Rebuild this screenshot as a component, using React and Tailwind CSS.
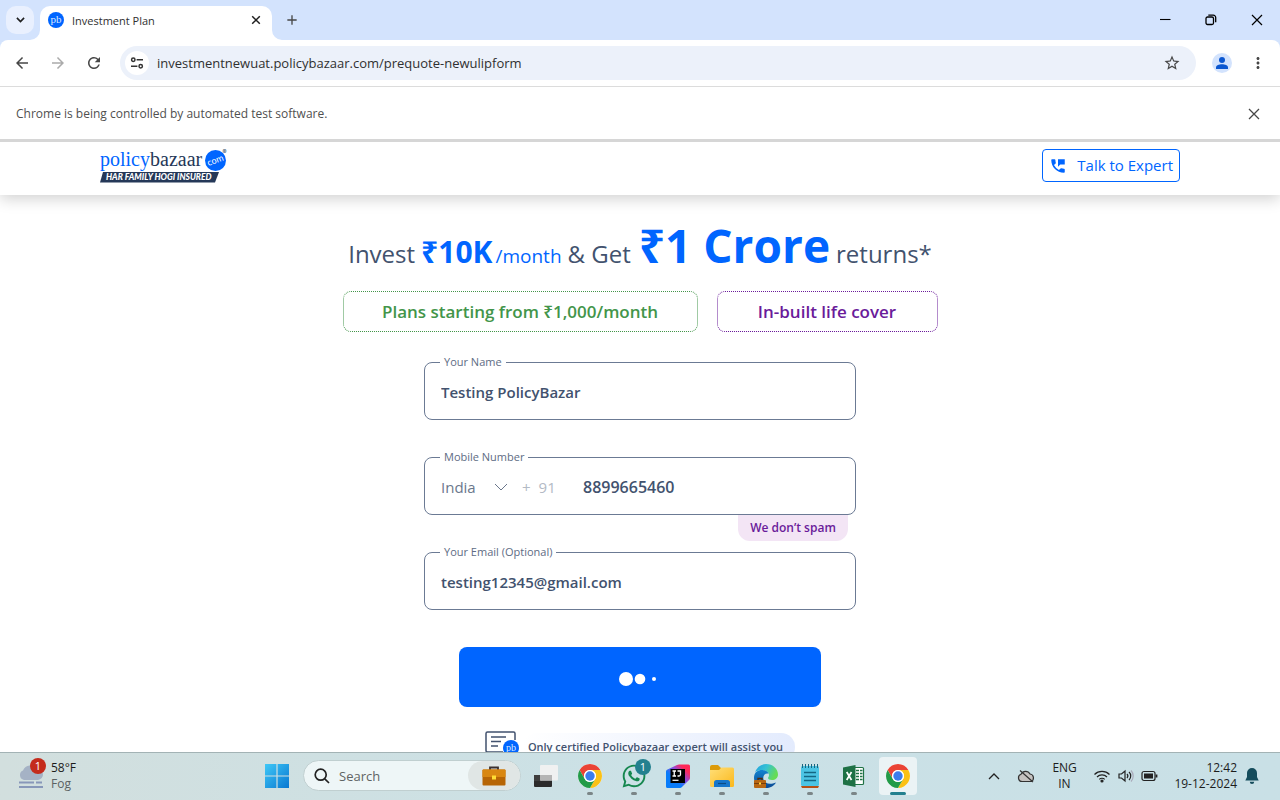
import React from "react";
import { MdArrowBack, MdArrowForward, MdRefresh, MdMoreVert, MdAdd, MdStarBorder, MdPermPhoneMsg } from "react-icons/md";
import { FaWhatsapp } from "react-icons/fa";

function PbBadge({ className }) {
  return (
    <svg viewBox="0 0 16 16" className={className} aria-hidden="true">
      <circle cx="8" cy="8" r="8" fill="#0065ff" />
      <text x="8" y="10.6" textAnchor="middle" fontSize="11" fill="#dbe8ff" fontFamily="Liberation Serif, serif">pb</text>
    </svg>
  );
}

function TabStrip() {
  return (
    <div className="flex h-10 shrink-0 items-start bg-[#d3e3fd]">
      <button aria-label="Search tabs" className="ml-[6px] mt-[6px] flex size-7 items-center justify-center rounded-[10px] bg-[#e9f0fe]">
        <svg viewBox="0 0 10 6" className="w-[9px]" fill="none" stroke="#1f1f1f" strokeWidth="1.8"><path d="M1 1l4 4 4-4" /></svg>
      </button>
      <div className="relative ml-[6px] mt-[6px] flex h-[34px] w-58 items-center rounded-t-[10px] bg-white pl-2 pr-[10px]">
        <svg viewBox="0 0 10 10" className="absolute -left-[10px] bottom-0 size-[10px]"><path d="M10 0v10H0A10 10 0 0 0 10 0z" fill="#fff" /></svg>
        <svg viewBox="0 0 10 10" className="absolute -right-[10px] bottom-0 size-[10px]"><path d="M0 0v10h10A10 10 0 0 1 0 0z" fill="#fff" /></svg>
        <PbBadge className="mb-[6px] size-4" />
        <span className="mb-1 ml-2 flex-1 text-[11px] leading-4 text-[#303030]">Investment Plan</span>
        <button aria-label="Close tab" className="mb-[6px] text-[#1f1f1f]">
          <svg viewBox="0 0 12 12" className="size-3" stroke="currentColor" strokeWidth="1.5"><path d="M2.2 2.2l7.6 7.6M9.8 2.2L2.2 9.8" /></svg>
        </button>
      </div>
      <button aria-label="New tab" className="ml-3 mt-3 text-[#474747]"><MdAdd className="size-4" /></button>
      <div className="ml-auto mr-[17px] mt-[14px] flex items-center gap-[34px] text-black">
        <button aria-label="Minimize"><svg viewBox="0 0 12 12" className="size-3" stroke="currentColor" strokeWidth="1.1"><path d="M1 5.500h10.500" /></svg></button>
        <button aria-label="Restore">
          <svg viewBox="0 0 12 12" className="size-3" fill="none" stroke="currentColor" strokeWidth="1.3"><rect x="1" y="3" width="7.500" height="7.500" rx="1.500" /><path d="M3.300 1.200h5a2.400 2.400 0 0 1 2.400 2.400v4.700" /></svg>
        </button>
        <button aria-label="Close"><svg viewBox="0 0 12 12" className="size-3" stroke="currentColor" strokeWidth="1.200"><path d="M1 1l10 10M11 1L1 11" /></svg></button>
      </div>
    </div>
  );
}

function Toolbar() {
  return (
    <div className="shrink-0 bg-[#d3e3fd]">
      <div className="flex h-[47px] items-center rounded-t-lg border-b border-[#dcdcdc] bg-white px-[13px] text-[#474747]">
        <button aria-label="Back"><MdArrowBack className="size-[18px]" /></button>
        <button aria-label="Forward" className="ml-[18px] text-[#ababab]"><MdArrowForward className="size-[18px]" /></button>
        <button aria-label="Reload" className="ml-[18px]"><MdRefresh className="size-[18px]" /></button>
        <div className="ml-[17px] flex h-[34px] flex-1 items-center rounded-full bg-[#ecf1fa] pl-[5px] pr-[15px]">
          <button aria-label="View site information" className="flex size-6 items-center justify-center rounded-full bg-white">
            <svg viewBox="0 0 14 12" className="h-3 w-[14px]" fill="none" stroke="#333" strokeWidth="1.500"><circle cx="3.300" cy="2.800" r="1.700" /><path d="M6.600 2.800H13M1 9.200h6.400" /><circle cx="10.700" cy="9.200" r="1.700" /></svg>
          </button>
          <input aria-label="Address" defaultValue="investmentnewuat.policybazaar.com/prequote-newulipform" className="ml-2 min-w-0 flex-1 bg-transparent text-[13px] leading-5 text-[#303030] outline-none" />
          <button aria-label="Bookmark this page"><MdStarBorder className="size-[18px]" /></button>
        </div>
        <button aria-label="Profile" className="ml-4 flex size-5 items-center justify-center rounded-full bg-[#d3e3fd] text-[#0b57d0]">
          <svg viewBox="0 0 14 14" className="size-[14px]" fill="currentColor"><circle cx="7" cy="4" r="3" /><path d="M1 13v-1.500C1 9.200 4 8.200 7 8.200s6 1 6 3.300V13z" /></svg>
        </button>
        <button aria-label="Menu" className="ml-[17px]"><MdMoreVert className="size-[18px]" /></button>
      </div>
    </div>
  );
}

function Logo() {
  return (
    <svg viewBox="0 0 130 36" className="h-9 w-[130px]" role="img" aria-label="policybazaar.com">
      <text x="0" y="18" fontSize="20" fontFamily="Liberation Serif, serif"><tspan fill="#0065ff">policy</tspan><tspan fill="#253858">bazaar</tspan></text>
      <circle cx="115.500" cy="12.500" r="10.500" fill="#0065ff" />
      <text x="115.500" y="15.300" textAnchor="middle" fontSize="9" fill="#fff" fontFamily="Lato, sans-serif" transform="rotate(-20 115.500 12.500)">com</text>
      <text x="122.500" y="6" fontSize="6" fill="#253858" fontFamily="Inter, sans-serif">®</text>
      <path d="M3 24h116l-4 10.500H0z" fill="#253858" />
      <text x="6" y="32.200" fontSize="8.500" fontWeight="900" fontStyle="italic" fill="#fff" fontFamily="Lato, sans-serif">HAR FAMILY HOGI INSURED</text>
    </svg>
  );
}

function Field({ id, label, children }) {
  return (
    <fieldset className="h-[66px] rounded-lg border border-[#6b7a94] px-[15px]">
      <legend className="px-1 text-[11px] leading-4 text-[#5e6c84]"><label htmlFor={id}>{label}</label></legend>
      <div className="flex h-[42px] items-center pl-px pt-px">{children}</div>
    </fieldset>
  );
}

const textInput = "w-full min-w-0 bg-transparent text-[15px] font-semibold leading-5 text-[#42526e] outline-none";
const phoneInput = "w-full min-w-0 bg-transparent text-[16px] font-semibold leading-5 text-[#42526e] outline-none";

function Page() {
  return (
    <main className="min-h-0 flex-1 overflow-hidden bg-white">
      <header className="flex h-14 items-center justify-between border-t-3 border-[#d6d6d6] px-[100px] pb-[6px] shadow-[0_4px_14px_rgba(0,0,0,0.18)]">
        <Logo />
        <a href="#expert" className="flex h-[33px] items-center gap-[10px] rounded border border-[#0065ff] px-[6px] text-[15px] text-[#0065ff]">
          <MdPermPhoneMsg className="size-[18px]" />
          <span>Talk to Expert</span>
        </a>
      </header>
      <div className="flex flex-col items-center">
        <h1 className="mt-5 flex h-[60px] items-baseline whitespace-nowrap text-[24px] font-normal leading-[60px] text-[#42526e]">
          <span>Invest</span>
          <strong className="ml-[6px] text-[30px] font-bold text-[#0065ff]">₹10K</strong>
          <span className="ml-[3px] text-[19px] text-[#0065ff]">/month</span>
          <span className="ml-[6px]">&amp; Get</span>
          <strong className="ml-[8px] text-[46px] font-bold text-[#0065ff]">₹1 Crore</strong>
          <span className="ml-[6px]">returns*</span>
        </h1>
        <ul className="mt-4 flex gap-[19px] text-[17px] font-semibold">
          <li className="flex h-[41px] w-[355px] items-center justify-center rounded-lg border border-dotted border-current text-[#43954a]">Plans starting from ₹1,000/month</li>
          <li className="flex h-[41px] w-[221px] items-center justify-center rounded-lg border border-dotted border-current text-[#6a1b9a]">In-built life cover</li>
        </ul>
        <form className="flex w-full flex-col items-center" onSubmit={(e) => e.preventDefault()}>
          <div className="mt-[22px] flex w-[432px] flex-col gap-[29px]">
            <Field id="name" label="Your Name"><input id="name" className={textInput} defaultValue="Testing PolicyBazar" /></Field>
            <div className="relative">
              <Field id="mobile" label="Mobile Number">
                <div className="relative shrink-0 text-[#6b778c]">
                  <select aria-label="Country" className="w-[67px] appearance-none bg-transparent text-[15px] leading-5 outline-none"><option>India</option></select>
                  <svg viewBox="0 0 14 8" className="pointer-events-none absolute right-0 top-2 h-2 w-[14px]" fill="none" stroke="currentColor"><path d="M1 1l6 6 6-6" /></svg>
                </div>
                <span className="ml-[14px] flex w-[61px] shrink-0 gap-2 text-[15px] leading-5 text-[#b3bac5]"><span>+</span><span>91</span></span>
                <input id="mobile" type="tel" className={phoneInput} defaultValue="8899665460" />
              </Field>
              <span className="absolute right-2 top-full flex h-[26px] w-[110px] items-center justify-center rounded-b-xl bg-[#f3e5f5] text-[12px] font-semibold text-[#6a1b9a]">We don’t spam</span>
            </div>
            <Field id="email" label="Your Email (Optional)"><input id="email" type="email" className={textInput} defaultValue="testing12345@gmail.com" /></Field>
          </div>
          <button aria-label="Loading" className="mt-[37px] flex h-[60px] w-[362px] items-center justify-center rounded-lg bg-[#0065ff]">
            <svg viewBox="0 0 44 18" className="h-[18px] w-11" fill="#fff"><circle cx="8" cy="11" r="7" /><circle cx="22" cy="11" r="5.300" /><circle cx="36" cy="11" r="2" /></svg>
          </button>
        </form>
        <div className="mt-6 flex items-start">
          <svg viewBox="0 0 38 28" className="h-7 w-[38px]" fill="none" stroke="#42526e" strokeWidth="1.500">
            <path d="M18 21H2.500A1.500 1.500 0 0 1 1 19.500v-17A1.500 1.500 0 0 1 2.500 1h26A1.500 1.500 0 0 1 30 2.500V9" />
            <path d="M6 6h15M6 10.500h10M6 15h7" />
            <circle cx="26" cy="17" r="8" fill="#0065ff" stroke="none" />
            <text x="26" y="20" textAnchor="middle" fontSize="10" fill="#dbe8ff" stroke="none" fontFamily="Liberation Serif, serif">pb</text>
          </svg>
          <p className="mt-[2px] flex h-7 items-center rounded-full bg-linear-to-r from-white to-[#e3ebfd] pl-[5px] pr-3 text-[11px] font-semibold text-[#42526e]">Only certified Policybazaar expert will assist you</p>
        </div>
      </div>
    </main>
  );
}

function ChromeIcon() {
  return (
    <svg viewBox="0 0 24 24" className="size-6">
      <circle cx="12" cy="12" r="12" fill="#fff" />
      <path d="M1.608 6A12 12 0 0 1 22.392 6H12a6 6 0 0 0-5.196 9z" fill="#ea4335" />
      <path d="M22.392 6A12 12 0 0 1 12 24l5.196-9A6 6 0 0 0 12 6z" fill="#fbc116" />
      <path d="M12 24A12 12 0 0 1 1.608 6l5.196 9A6 6 0 0 0 17.196 15z" fill="#229b48" />
      <circle cx="12" cy="12" r="6" fill="#fff" />
      <circle cx="12" cy="12" r="4.700" fill="#3b7ded" />
    </svg>
  );
}

function WhatsAppIcon() {
  return (
    <span className="relative">
      <FaWhatsapp className="size-[26px] text-[#16874f]" />
      <span className="absolute -right-[4px] -top-[4px] flex size-4 items-center justify-center rounded-full bg-[#23808f] text-[11px] leading-4 text-white">1</span>
    </span>
  );
}

function IdeaIcon() {
  return (
    <svg viewBox="0 0 24 24" className="size-6">
      <defs><linearGradient id="ij" x1="0" y1="1" x2="1" y2="0"><stop offset=".35" stopColor="#087cfa" /><stop offset=".58" stopColor="#8b4be0" /><stop offset=".8" stopColor="#fe2857" /></linearGradient></defs>
      <path d="M0 7.500q0-1.200 1-1.700L11 1q1-.5 2-.5h9.500Q24 .5 24 2v12q0 1-.7 1.700l-7.600 7.600q-.7.700-1.700.7H1.500Q0 24 0 22.500z" fill="url(#ij)" />
      <rect x="4.500" y="5" width="14.500" height="14" fill="#000" />
      <path d="M6.500 7h3.500M8.250 7v5M6.500 12h3.500M11.500 7H14.500v3.500q0 1.500-1.500 1.500h-1.500" fill="none" stroke="#fff" strokeWidth="1.300" />
      <path d="M6.500 16.300h6" stroke="#fff" strokeWidth="1.200" />
    </svg>
  );
}

function FolderIcon() {
  return (
    <svg viewBox="0 0 24 24" className="size-6">
      <defs><linearGradient id="fo" x1="0" y1="0" x2="1" y2="1"><stop stopColor="#ffdf78" /><stop offset="1" stopColor="#fbb81c" /></linearGradient></defs>
      <path d="M0 3q0-2 2-2h6l3 3H23v6H0z" fill="#dc9a08" />
      <path d="M0 6h9l2.500-2.500H22.500A1.500 1.500 0 0 1 24 5v16.500A1.500 1.500 0 0 1 22.500 23h-21A1.500 1.500 0 0 1 0 21.500z" fill="url(#fo)" />
      <path d="M4 23v-4.500A2.500 2.500 0 0 1 6.500 16h11a2.500 2.500 0 0 1 2.500 2.500V23z" fill="#1676cb" />
      <path d="M8 19.500h8" stroke="#0c4c85" strokeWidth="1.200" />
    </svg>
  );
}

function EdgeIcon() {
  return (
    <svg viewBox="0 0 24 24" className="size-6">
      <defs>
        <linearGradient id="ed" x1="0" y1="0" x2="1" y2=".4"><stop stopColor="#1f9fe0" /><stop offset=".5" stopColor="#36c2d3" /><stop offset="1" stopColor="#65dc55" /></linearGradient>
        <linearGradient id="ed2" x1="0" y1="0" x2="0" y2="1"><stop stopColor="#1283d0" /><stop offset="1" stopColor="#0c4a93" /></linearGradient>
      </defs>
      <path d="M1 8C3 3 7 0 12 0c7 0 12 5 12 10.500 0 3.500-2.600 5.500-6 5.500-2.500 0-4-1-4-2 0-.7 1-1.200 1-3 0-2.800-3-5-7-5-3 0-5.500 1-7 2z" fill="url(#ed)" />
      <path d="M0 14C0 8 4 6 8 6c3.500 0 6 1.700 6.700 3.600C11 8.500 8.500 12 9.500 15.500c1.200 4 6 5.500 12.500 3C19.500 22.500 16 24 12 24 5 24 0 19 0 14z" fill="url(#ed2)" />
      <rect x="0" y="16" width="12" height="8" rx="1" fill="#b76512" />
      <path d="M4 16v-1.500h4V16" fill="none" stroke="#532b0a" strokeWidth="1.300" />
      <path d="M0 19.500h12" stroke="#783d08" />
      <rect x="5" y="18.500" width="2" height="2" fill="#ffd83f" />
    </svg>
  );
}

function NotepadIcon() {
  return (
    <svg viewBox="0 0 24 24" className="size-6">
      <rect x="3" y="2" width="18" height="20" rx="1.500" fill="#4cc4e4" />
      <path d="M3 22h18l-1 2H4z" fill="#b75016" />
      <path d="M4.500 0v4M7.500 0v4M10.500 0v4M13.500 0v4M16.500 0v4M19.500 0v4" stroke="#18657f" />
      <path d="M6 8.500h12M6 12.500h12M6 16.500h12" stroke="#146784" strokeWidth="1.300" />
    </svg>
  );
}

function ExcelIcon() {
  return (
    <svg viewBox="0 0 24 24" className="size-6">
      <rect x="11" y="3.500" width="10.500" height="17" rx="1" fill="#fff" stroke="#217346" strokeWidth="1.200" />
      <path d="M14 6.500h3M18 6.500h2.500M14 9.500h3M18 9.500h2.500M14 12.500h3M18 12.500h2.500M14 15.500h3M18 15.500h2.500" stroke="#217346" strokeWidth="1.600" />
      <path d="M1 3.500l12.500-2.500v22L1 20.500z" fill="#1e7145" />
      <path d="M4.700 8l4.800 8M9.500 8L4.700 16" stroke="#fff" strokeWidth="1.700" />
    </svg>
  );
}

function DesktopIcon() {
  return (
    <svg viewBox="0 0 24 24" className="size-6">
      <rect x="0" y="11" width="18" height="12" rx="1" fill="#2b2b2b" />
      <rect x="0" y="11" width="8" height="6" fill="#3e3e3e" />
      <rect x="6" y="1" width="18" height="15.500" rx="1" fill="#f0f1f1" />
      <path d="M6 11h12v5.500H6z" fill="#b5b5b5" />
    </svg>
  );
}

function Briefcase() {
  return (
    <svg viewBox="0 0 24 20" className="h-5 w-6">
      <path d="M8 4V1.500h8V4" fill="none" stroke="#3b3030" strokeWidth="1.800" />
      <rect x=".5" y="3.500" width="23" height="16" rx="1" fill="#b76505" />
      <path d="M.5 4.500q0-1 1-1h21q1 0 1 1V11H.5z" fill="#d98711" />
      <rect x="10" y="9.500" width="4" height="4" fill="#ffdd35" />
    </svg>
  );
}

const apps = [
  { name: "Desktop", icon: DesktopIcon, open: false },
  { name: "Google Chrome", icon: ChromeIcon, open: true },
  { name: "WhatsApp", icon: WhatsAppIcon, open: true },
  { name: "IntelliJ IDEA", icon: IdeaIcon, open: true },
  { name: "File Explorer", icon: FolderIcon, open: true },
  { name: "Microsoft Edge", icon: EdgeIcon, open: true },
  { name: "Notepad", icon: NotepadIcon, open: true },
  { name: "Excel", icon: ExcelIcon, open: true },
  { name: "Chrome test window", icon: ChromeIcon, open: true, active: true },
];

function Taskbar() {
  return (
    <footer className="flex h-12 shrink-0 items-center border-t border-[#a3b3b5] bg-linear-to-r from-[#d2dfde] via-[#cbe1e6] to-[#c9e0e6] pb-[2px] text-[12px] leading-4 text-[#1c1c1c]">
      <button className="flex w-[253px] items-center pl-[18px] text-left">
        <span className="relative">
          <svg viewBox="0 0 26 28" className="h-7 w-[26px]">
            <path d="M6 18a5 5 0 0 1-1-9.500A8 8 0 0 1 19 7a5.500 5.500 0 0 1 1 11z" fill="#a5b2c5" />
            <path d="M1 20.500h15M18 20.500h6M1 25h24" stroke="#8797b9" strokeWidth="2" />
          </svg>
          <span className="absolute -right-[2px] -top-[4px] flex size-4 items-center justify-center rounded-full bg-[#c42b1c] text-[11px] text-white">1</span>
        </span>
        <span className="ml-[7px]"><span className="block">58°F</span><span className="block text-[#5b6262]">Fog</span></span>
      </button>
      <button aria-label="Start" className="ml-3">
        <svg viewBox="0 0 24 24" className="size-6">
          <defs><linearGradient id="win" x1="0" y1="0" x2="1" y2="1"><stop stopColor="#3fc8f7" /><stop offset="1" stopColor="#0877d1" /></linearGradient></defs>
          <path d="M0 0h11.400v11.400H0zM12.600 0H24v11.400H12.600zM0 12.600h11.400V24H0zM12.600 12.600H24V24H12.600z" fill="url(#win)" />
        </svg>
      </button>
      <div className="ml-[14px] flex h-[31px] w-[218px] items-center rounded-full border border-[#c0cfd0] bg-[#eef6f7] pl-[10px]">
        <svg viewBox="0 0 16 16" className="size-4 shrink-0" fill="none" stroke="#222" strokeWidth="1.700"><circle cx="6.700" cy="6.700" r="5.500" /><path d="M10.800 10.800L15 15" /></svg>
        <input aria-label="Search" placeholder="Search" className="ml-[9px] min-w-0 flex-1 bg-transparent text-[13px] outline-none placeholder:text-[#5f6464]" />
        <span className="flex h-full w-[52px] items-center justify-center rounded-full bg-[#e0e6e5]"><Briefcase /></span>
      </div>
      <nav aria-label="Apps" className="ml-[6px] flex gap-[6px]">
        {apps.map((app) => (
          <button key={app.name} aria-label={app.name} className={app.active ? "relative flex h-[38px] w-[38px] items-center justify-center rounded bg-[#ebf3f5]" : "relative flex h-[38px] w-[38px] items-center justify-center"}>
            <app.icon />
            {app.open && <span className={app.active ? "absolute bottom-0 h-[3px] w-4 rounded-full bg-[#23808f]" : "absolute bottom-0 h-[3px] w-[6px] rounded-full bg-[#7b8587]"} />}
          </button>
        ))}
      </nav>
      <div className="ml-auto flex items-center pr-[21px]">
        <button aria-label="Show hidden icons"><svg viewBox="0 0 12 8" className="h-2 w-3" fill="none" stroke="#222" strokeWidth="1.300"><path d="M1 7l5-5 5 5" /></svg></button>
        <button aria-label="OneDrive" className="ml-[17px]">
          <svg viewBox="0 0 18 14" className="h-[14px] w-[18px]" fill="#c5c2c0" stroke="#333" strokeWidth="1.200"><path d="M5 12.500A3.700 3.700 0 0 1 4 5.300 5 5 0 0 1 13 5a3.900 3.900 0 0 1 1 7.500zM3 1.500l13 11.500" /></svg>
        </button>
        <button className="ml-[17px] w-[24px] text-center">ENG<br />IN</button>
        <button aria-label="Network, sound and battery" className="ml-[17px] flex items-center gap-[7px]">
          <svg viewBox="0 0 18 14" className="h-[14px] w-[18px]" fill="none" stroke="#222" strokeWidth="1.200"><path d="M1.500 5.500a10.500 10.500 0 0 1 15 0M4 8a7 7 0 0 1 10 0M6.300 10.400a3.700 3.700 0 0 1 5.400 0" /><circle cx="9" cy="12" r="1" fill="#222" /></svg>
          <svg viewBox="0 0 16 14" className="h-[14px] w-4" fill="none" stroke="#222" strokeWidth="1.200"><path d="M1 5h2.500L7 2v10L3.500 9H1zM9 5a3 3 0 0 1 0 4M11 3a5.500 5.500 0 0 1 0 8" /><path d="M13 1.500a8 8 0 0 1 0 11" stroke="#aab" /></svg>
          <svg viewBox="0 0 17 12" className="h-3 w-[17px]" fill="none" stroke="#222" strokeWidth="1.200"><rect x="1" y="1.500" width="13" height="9" rx="2" /><rect x="3" y="3.500" width="9" height="5" fill="#222" stroke="none" /><path d="M15.500 4.500v3" strokeWidth="1.800" /></svg>
        </button>
        <button className="ml-4 text-right">12:42<br />19-12-2024</button>
        <button aria-label="Notifications" className="ml-2">
          <svg viewBox="0 0 14 16" className="h-4 w-[14px]" fill="#154c5c"><path d="M7 0a5 5 0 0 0-5 5v4L.3 12.500h13.400L12 9V5a5 5 0 0 0-5-5zM4.800 13.700h4.400a2.200 2.200 0 0 1-4.400 0z" /></svg>
        </button>
      </div>
    </footer>
  );
}

export default function App() {
  return (
    <div className="flex h-screen flex-col overflow-hidden bg-white font-['Open_Sans','Noto_Sans',sans-serif]">
      <TabStrip />
      <Toolbar />
      <div className="flex h-[52px] shrink-0 items-center justify-between bg-white px-4 pt-[2px] text-[12px] text-[#505050]">
        <span>Chrome is being controlled by automated test software.</span>
        <button aria-label="Dismiss" className="mr-[2px] text-[#474747]"><svg viewBox="0 0 16 16" className="size-4" stroke="currentColor" strokeWidth="1.300"><path d="M3 3l10 10M13 3L3 13" /></svg></button>
      </div>
      <Page />
      <Taskbar />
    </div>
  );
}
